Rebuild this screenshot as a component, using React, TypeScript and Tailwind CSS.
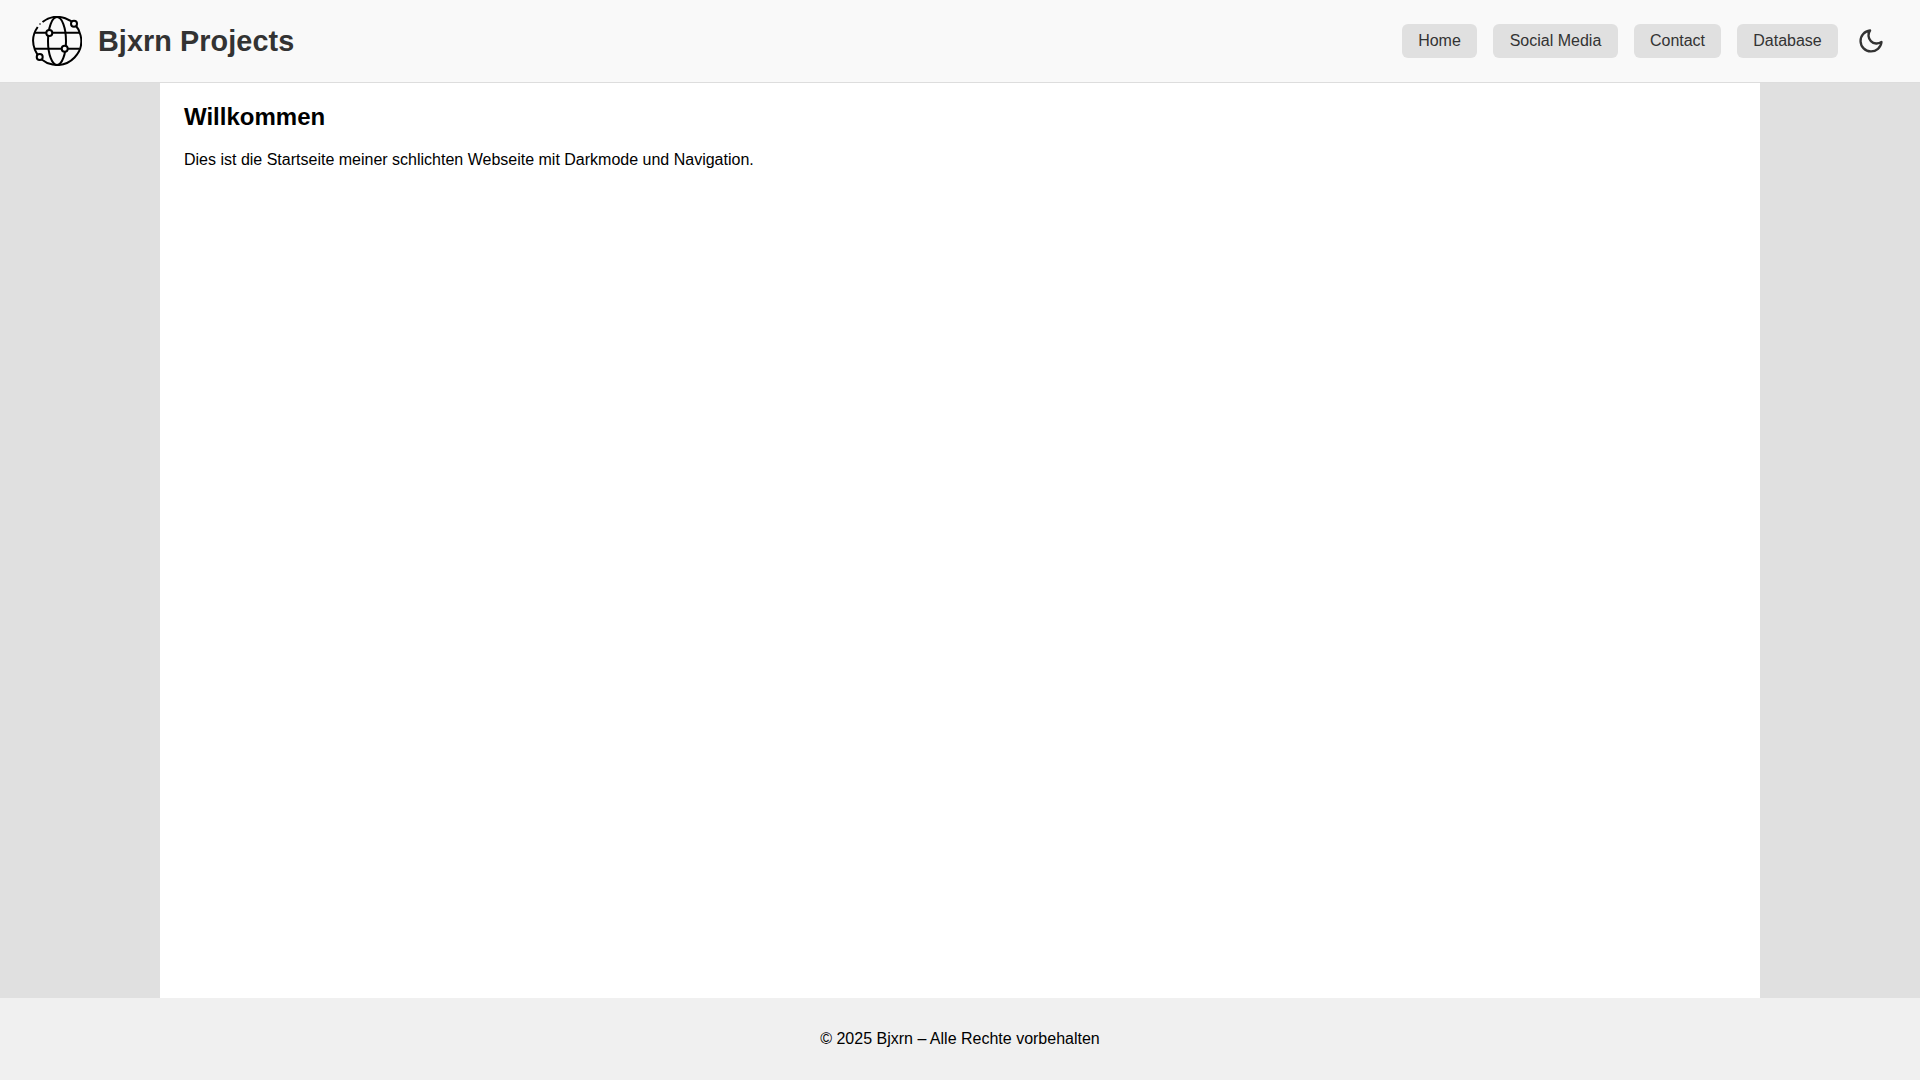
const navItems = [
  { label: "Home", width: "w-[75px]" },
  { label: "Social Media", width: "w-[125px]" },
  { label: "Contact", width: "w-[87px]" },
  { label: "Database", width: "w-[101px]" },
];

function GlobeLogo() {
  return (
    <svg viewBox="0 0 50 50" className="w-[50px] h-[50px] shrink-0" fill="none" stroke="#000" strokeWidth="2">
      {/* ring has a small break at the top left */}
      <path d="M10.500 6A24 24 0 1 1 5.700 11" />
      <circle cx="8" cy="8" r="0.8" fill="#000" stroke="none" />
      <ellipse cx="25" cy="25" rx="9" ry="24" />
      <path d="M3 16.700H47M3 32.700H47" />
      {/* nodes sit on top of the lines */}
      <circle cx="17.300" cy="17" r="3" fill="#f9f9f9" />
      <circle cx="32.700" cy="32.700" r="3" fill="#f9f9f9" />
      <circle cx="42" cy="7.700" r="3" fill="#f9f9f9" />
      <circle cx="7.700" cy="41" r="3" fill="#f9f9f9" />
    </svg>
  );
}

function MoonIcon() {
  return (
    <svg viewBox="0 0 24 24" className="w-7 h-7" fill="none" stroke="currentColor" strokeWidth="2" strokeLinecap="round" strokeLinejoin="round">
      <path d="M21 12.790A9 9 0 1 1 11.210 3 7 7 0 0 0 21 12.790z" />
    </svg>
  );
}

export default function App() {
  return (
    <div className="min-h-[1080px] flex flex-col bg-[#e0e0e0] font-['Liberation_Sans',Arial,sans-serif] text-black">
      <header className="h-[83px] flex items-center justify-between bg-[#f9f9f9] border-b border-[#dddddd] px-8">
        <div className="flex items-center gap-4">
          <GlobeLogo />
          <span className="pt-[2px] text-[28.8px] font-bold tracking-[0.07px] text-[#333333]">Bjxrn Projects</span>
        </div>
        <nav className="flex items-center gap-4">
          {navItems.map((item) => (
            <a key={item.label} href="#" className={`${item.width} h-[34px] flex items-center justify-center rounded-md bg-[#e0e0e0] text-[#333333] text-base`}>
              {item.label}
            </a>
          ))}
          <button className="w-[34px] h-[34px] flex items-center justify-center text-[#333333]">
            <MoonIcon />
          </button>
        </nav>
      </header>
      <main className="w-[1600px] mx-auto flex-1 bg-white px-6 pt-[17px]">
        <h1 className="text-2xl font-bold leading-[34px]">Willkommen</h1>
        <p className="mt-[14px] text-base">Dies ist die Startseite meiner schlichten Webseite mit Darkmode und Navigation.</p>
      </main>
      <footer className="h-[82px] flex items-center justify-center bg-[#f0f0f0] text-base">
        © 2025 Bjxrn – Alle Rechte vorbehalten
      </footer>
    </div>
  );
}
